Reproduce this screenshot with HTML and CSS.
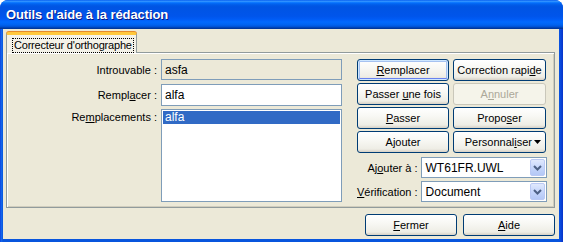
FILE: index.html
```html
<!DOCTYPE html>
<html lang="fr">
<head>
    <meta charset="UTF-8">
    <title>Outils d'aide à la rédaction</title>
    <link rel="stylesheet" href="styles.css">
</head>
<body>
    <div class="window">
        <div class="titlebar">
            <span class="title">Outils d'aide à la rédaction</span>
        </div>

        <div class="client">
            <div class="tabs">
                <div class="tab tab-active"><span class="focus">Correcteur d'orthographe</span></div>
            </div>

            <div class="panel">
                <div class="words">
                    <label class="lbl">Introuvable :</label>
                    <div class="field field-readonly">asfa</div>

                    <label class="lbl">Rempl<u>a</u>cer :</label>
                    <div class="field">alfa</div>

                    <label class="lbl lbl-top">Re<u>m</u>placements :</label>
                    <div class="listbox">
                        <div class="item item-selected">alfa</div>
                    </div>
                </div>

                <div class="actions">
                    <div class="btn-grid">
                        <button class="btn btn-default"><u>R</u>emplacer</button>
                        <button class="btn">Correction rapi<u>d</u>e</button>
                        <button class="btn">Passer <u>u</u>ne fois</button>
                        <button class="btn" disabled>A<u>n</u>nuler</button>
                        <button class="btn"><u>P</u>asser</button>
                        <button class="btn">Propo<u>s</u>er</button>
                        <button class="btn">Ajouter</button>
                        <button class="btn btn-menu"><span>Personnal<u>i</u>ser</span><svg class="caret" width="7" height="4" viewBox="0 0 7 4"><path d="M0 0h7L3.5 4z" fill="#000"/></svg></button>
                    </div>

                    <div class="options">
                        <label class="lbl">Aj<u>o</u>uter à :</label>
                        <div class="combo">
                            <span class="combo-text">WT61FR.UWL</span>
                            <span class="combo-drop">
                                <svg width="9" height="6" viewBox="0 0 9 6"><path d="M1 1l3.5 3.5L8 1" fill="none" stroke="#4D6185" stroke-width="2"/></svg>
                            </span>
                        </div>

                        <label class="lbl"><u>V</u>érification :</label>
                        <div class="combo">
                            <span class="combo-text">Document</span>
                            <span class="combo-drop">
                                <svg width="9" height="6" viewBox="0 0 9 6"><path d="M1 1l3.5 3.5L8 1" fill="none" stroke="#4D6185" stroke-width="2"/></svg>
                            </span>
                        </div>
                    </div>
                </div>
            </div>

            <div class="footer">
                <button class="btn btn-wide"><u>F</u>ermer</button>
                <button class="btn btn-wide"><u>A</u>ide</button>
            </div>
        </div>
    </div>
</body>
</html>
```

FILE: styles.css
```css
* {
    margin: 0;
    padding: 0;
    box-sizing: border-box;
}

body {
    background: #ffffff;
    font-family: 'Liberation Sans', Arial, sans-serif;
    font-size: 11px;
    color: #000;
}

.window {
    width: 563px;
    height: 242px;
    display: flex;
    flex-direction: column;
    background: linear-gradient(90deg, #0831d9 0, #166aee 1px, #0855dd 3px, #0855dd 559px, #0a4ee2 560px, #0733c8 563px);
    border-radius: 8px 8px 0 0;
    overflow: hidden;
}

/* barre de titre */
.titlebar {
    height: 29px;
    flex: none;
    display: flex;
    align-items: center;
    padding: 0 6px 1px;
    background: linear-gradient(180deg, #0058ee 0%, #3593ff 4%, #288eff 6%, #127dff 8%, #036ffc 10%, #0262ee 14%, #0057e5 20%, #0054e3 24%, #0055eb 56%, #005bf5 66%, #026afe 76%, #0062ef 86%, #0052d6 92%, #0040ab 96%, #003092 100%);
}

.title {
    color: #ffffff;
    font-weight: bold;
    font-size: 13px;
    letter-spacing: -0.1px;
    text-shadow: 1px 1px 0 #0a1883;
}

.client {
    flex: 1;
    margin: 0 4px 3px 3px;
    padding: 3px 4px 3px 3px;
    background: #ece9d8;
    display: flex;
    flex-direction: column;
}

/* onglets */
.tabs {
    display: flex;
    height: 20px;
    position: relative;
    z-index: 1;
}

.tab {
    height: 21px;
    padding: 4px 3px 0 6px;
    border: 1px solid #919b9c;
    border-bottom: none;
    border-top: 3px solid #ffc83c;
    border-radius: 3px 3px 0 0;
    background: #f4f2e8;
    box-shadow: 0 -1px 0 #e68b2c;
    letter-spacing: -0.2px;
}

.focus {
    display: block;
    padding: 0 1px 1px;
    outline: 1px dotted #000;
    line-height: 12px;
}

.panel {
    height: 156px;
    display: flex;
    gap: 15px;
    padding: 6px 8px 4px 0;
    border: 1px solid #919b9c;
    box-shadow: inset 1px 1px 0 #ffffff, inset -1px -1px 0 #d0cdbd;
    background: #ece9d8;
}

/* partie gauche */
.words {
    width: 335px;
    display: grid;
    grid-template-columns: 150px 181px;
    grid-template-rows: 22px 22px 93px;
    column-gap: 4px;
    row-gap: 3px;
}

.words .field:first-of-type {
    margin-bottom: 1px;
}

.lbl {
    text-align: right;
    white-space: nowrap;
    align-self: center;
}

.lbl-top {
    align-self: start;
    padding-top: 2px;
}

.field {
    border: 1px solid #7f9db9;
    background: #ffffff;
    padding: 0 3px;
    display: flex;
    align-items: center;
    font-size: 12px;
}

.field-readonly {
    background: #ece9d8;
}

.listbox {
    border: 1px solid #7f9db9;
    background: #ffffff;
    padding: 1px;
}

.item {
    height: 13px;
    line-height: 13px;
    padding-left: 2px;
    font-size: 12px;
}

.item-selected {
    background: #316ac5;
    color: #ffffff;
}

/* partie droite */
.actions {
    width: 189px;
    display: flex;
    flex-direction: column;
}

.btn-grid {
    display: grid;
    grid-template-columns: 92px 93px;
    grid-auto-rows: 22px;
    gap: 2px 4px;
}

.btn {
    font-family: inherit;
    font-size: 11px;
    color: #000;
    border: 1px solid #003c74;
    border-radius: 3px;
    background: linear-gradient(180deg, #ffffff 0%, #f8f8f4 40%, #eeede5 85%, #d6d0c5 100%);
    text-align: center;
    white-space: nowrap;
}

.btn-default {
    box-shadow: inset 0 0 0 1px #cee7ff, inset 0 -2px 0 #6982ee, inset 0 0 0 2px #a6c2f0;
}

.btn:disabled {
    border-color: #c9c7ba;
    background: #f5f4ea;
    color: #aca899;
}

.btn-menu {
    display: flex;
    align-items: center;
    justify-content: flex-end;
    padding-right: 4px;
    gap: 2px;
}

.caret {
    margin-top: -1px;
}

.options {
    margin-top: 4px;
    display: grid;
    grid-template-columns: 1fr 126px;
    grid-auto-rows: 21px;
    gap: 3px 3px;
}

.combo {
    border: 1px solid #7f9db9;
    background: #ffffff;
    display: flex;
    align-items: center;
    padding: 1px;
}

.combo-text {
    flex: 1;
    padding-left: 3px;
    font-size: 12px;
}

.combo-drop {
    width: 15px;
    height: 17px;
    border: 1px solid #bac9f4;
    border-radius: 2px;
    background: linear-gradient(180deg, #e0e9fd 0%, #c6d6fb 50%, #b4c8f6 100%);
    display: flex;
    align-items: center;
    justify-content: center;
}

/* boutons du bas */
.footer {
    margin-top: 6px;
    display: flex;
    justify-content: flex-end;
    gap: 6px;
    height: 22px;
}

.btn-wide {
    width: 92px;
}
```
